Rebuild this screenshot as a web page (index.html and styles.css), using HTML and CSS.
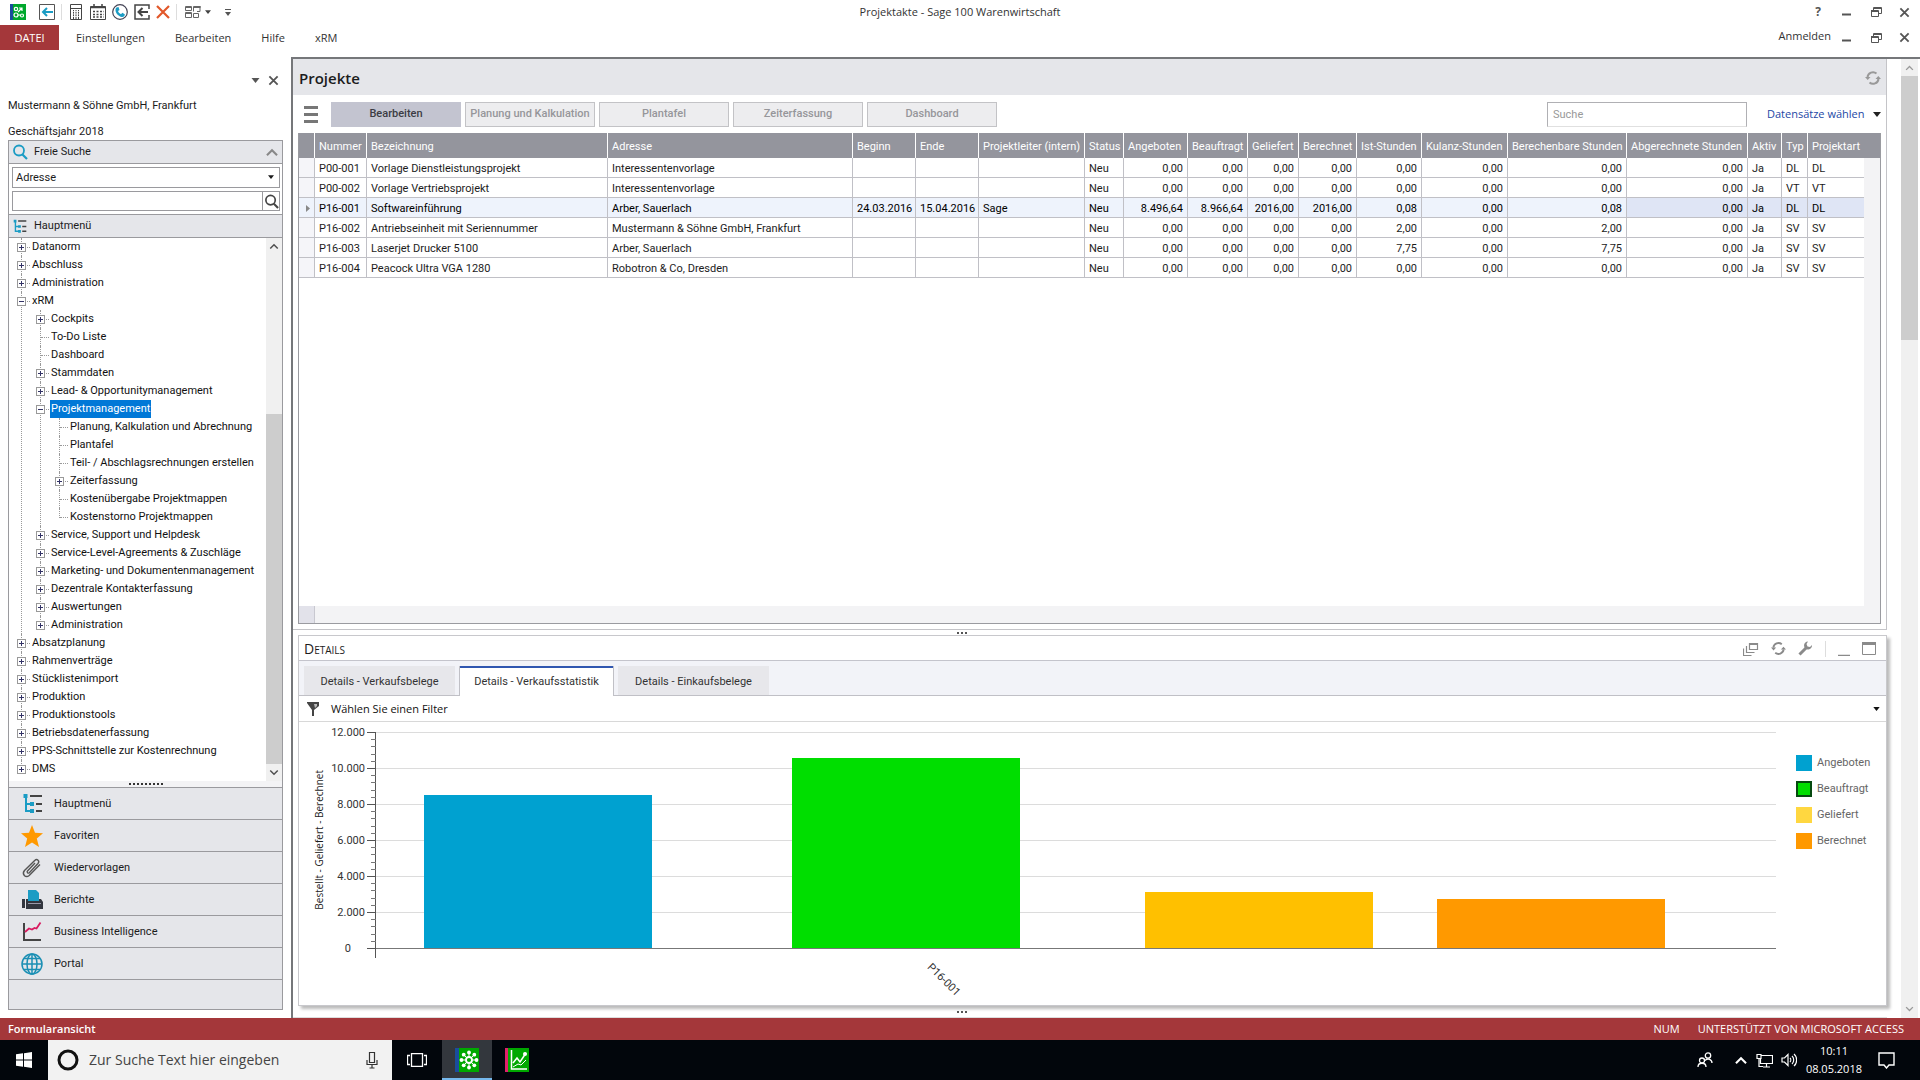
FILE: index.html
```html
<!DOCTYPE html>
<html lang="de">
<head>
<meta charset="utf-8">
<title>Projektakte - Sage 100 Warenwirtschaft</title>
<link rel="stylesheet" href="styles.css">
</head>
<body>
<svg class="defs" aria-hidden="true">
  <symbol id="i-close" viewBox="0 0 12 12"><path d="M1.5 1.5l9 9M10.5 1.5l-9 9" fill="none" stroke="currentColor" stroke-width="2"/></symbol>
  <symbol id="i-restore" viewBox="0 0 12 12"><path d="M3.5 4V1.5h8v6H9M1 4.5h7.500v6H1.500v-6M1 5.500h7.500M3.500 2.500h8" fill="none" stroke="currentColor"/></symbol>
  <symbol id="i-min" viewBox="0 0 12 12"><path d="M1 8.500h9" stroke="currentColor" stroke-width="2"/></symbol>
  <symbol id="i-refresh" viewBox="0 0 16 16"><path d="M2.500 7A5.500 5.500 0 0 1 11.500 3.500M13.500 9A5.500 5.500 0 0 1 4.500 12.500" fill="none" stroke="currentColor" stroke-width="2"/><path d="M0 7h5.500L2.700 10zM10.500 9H16l-2.700-3z" fill="currentColor"/></symbol>
  <symbol id="i-menu" viewBox="0 0 22 22"><path d="M5 4v14h6M5 11h6" fill="none" stroke="#1b9cc4" stroke-width="2"/><path d="M2.500 1h4v4h-4zM9 9h4v4H9zM9 16h4v4H9z" fill="#1b9cc4"/><path d="M9 3h12M15 11h6M15 18h6" stroke="#444" stroke-width="2"/></symbol>
  <symbol id="i-search" viewBox="0 0 16 16"><circle cx="7" cy="6.500" r="5" fill="none" stroke="currentColor" stroke-width="1.800"/><path d="M10.500 10.500l4.500 4.500" stroke="currentColor" stroke-width="2.200"/></symbol>
  <symbol id="i-up" viewBox="0 0 12 8"><path d="M1.500 6.500L6 2l4.500 4.500" fill="none" stroke="currentColor" stroke-width="1.800"/></symbol>
  <symbol id="i-down" viewBox="0 0 12 8"><path d="M1.500 1.500L6 6l4.500-4.500" fill="none" stroke="currentColor" stroke-width="1.800"/></symbol>
  <symbol id="i-tri" viewBox="0 0 8 5"><path d="M0 0h8L4 5z" fill="currentColor"/></symbol>
</svg>
<div class="app">
  <header class="titlebar">
    <div class="quick">
      <svg width="16" height="16" viewBox="0 0 16 16"><path d="M0 0h16v16H0z" fill="#00a82d"/><path d="M0 0h3v16H0z" fill="#1a4d9c"/><g fill="none" stroke="#fff" stroke-width="1.200"><circle cx="6" cy="5" r="1.700"/><circle cx="6" cy="11" r="2"/><circle cx="12" cy="11.500" r="1.500"/><path d="M8 8l4-4M9 4h3v3M8 11h2"/></g></svg>
      <svg class="q2" width="16" height="16" viewBox="0 0 16 16"><path d="M.5.500h15v15H.500z" fill="#fff" stroke="#555"/><path d="M14 8H4M8 4L4 8l4 4" fill="none" stroke="#1b9cc4" stroke-width="2"/></svg>
      <i class="bar"></i>
      <svg width="12" height="16" viewBox="0 0 12 16"><path d="M.5.500h11v15H.500zM.500 4.500h11M3.500 6v9M6 6v9M8.500 6v9" fill="none" stroke="#444"/><path d="M1 7.500h10M1 10h10M1 12.500h10" stroke="#fff" stroke-width=".8"/></svg>
      <svg class="q4" width="16" height="16" viewBox="0 0 16 16"><path d="M.500 2.500h15v13H.500z" fill="none" stroke="#444"/><path d="M.500 3.500h15M4 0v3M12 0v3" stroke="#444" stroke-width="1.500"/><path d="M3 7.500h11M3 10.500h11M3 13h11" stroke="#444" stroke-width="1.500" stroke-dasharray="2 1.500"/></svg>
      <svg width="16" height="16" viewBox="0 0 16 16"><circle cx="8" cy="8" r="7.300" fill="#fff" stroke="#445" stroke-width="1.200"/><path d="M4.500 3.500l2-.5 1 3-1.500 1c.5 1.500 1.500 2.500 3 3.200l1.300-1.400 2.500 1.500c0 2-1.500 3-3 2.700C6.500 12.500 3.500 9 3.500 6c0-1 .3-2 1-2.500z" fill="#1b9cc4"/></svg>
      <svg width="16" height="16" viewBox="0 0 16 16"><path d="M15 5V1H1v14h14v-4" fill="none" stroke="#444" stroke-width="1.500"/><path d="M14 8H5M8.500 4L4.500 8l4 4" fill="none" stroke="#444" stroke-width="2"/></svg>
      <svg width="14" height="14" viewBox="0 0 14 14"><path d="M1 1l12 12M13 1L1 13" stroke="#e2582a" stroke-width="2.200"/></svg>
      <i class="bar"></i>
      <svg width="16" height="14" viewBox="0 0 16 14"><path d="M.500 5.500v-4h6v4zM8.500 6.500v-5h7M15 1v5.500h-3M.500 12.500v-5h6v5zM8.500 12.500v-4h5v4zM.500 2.500h6M8.500 2.500h7M.500 8.500h6" fill="none" stroke="#666"/></svg>
      <svg class="tri" width="6" height="4"><use href="#i-tri"/></svg>
      <svg class="q9" width="6" height="7" viewBox="0 0 6 7"><path d="M0 .500h6" stroke="#555"/><path d="M0 3h6L3 7z" fill="#555"/></svg>
    </div>
    <h1 class="apptitle">Projektakte - Sage 100 Warenwirtschaft</h1>
    <div class="winctl">
      <button class="ib help" aria-label="Hilfe">?</button>
      <button class="ib" aria-label="Minimieren"><svg width="12" height="12"><use href="#i-min"/></svg></button>
      <button class="ib" aria-label="Wiederherstellen"><svg width="12" height="12"><use href="#i-restore"/></svg></button>
      <button class="ib" aria-label="Schließen"><svg width="11" height="11"><use href="#i-close"/></svg></button>
    </div>
  </header>
  <nav class="menubar">
    <button class="file">DATEI</button>
    <button>Einstellungen</button>
    <button>Bearbeiten</button>
    <button>Hilfe</button>
    <button>xRM</button>
    <div class="winctl">
      <a href="#" class="login">Anmelden</a>
      <button class="ib" aria-label="Formular minimieren"><svg width="12" height="12"><use href="#i-min"/></svg></button>
      <button class="ib" aria-label="Formular wiederherstellen"><svg width="12" height="12"><use href="#i-restore"/></svg></button>
      <button class="ib" aria-label="Formular schließen"><svg width="11" height="11"><use href="#i-close"/></svg></button>
    </div>
  </nav>

  <div class="work">
    <aside class="side">
      <div class="sidectl">
        <button class="ib" aria-label="Optionen"><svg width="9" height="5"><use href="#i-tri"/></svg></button>
        <button class="ib" aria-label="Bereich schließen"><svg width="11" height="11"><use href="#i-close"/></svg></button>
      </div>
      <p class="firm">Mustermann &amp; Söhne GmbH, Frankfurt</p>
      <p class="year">Geschäftsjahr 2018</p>
      <div class="sidebox">
        <h2 class="sidehead"><svg class="blue" width="16" height="16"><use href="#i-search"/></svg><span>Freie Suche</span><svg class="grey" width="14" height="9"><use href="#i-up"/></svg></h2>
        <div class="finder">
          <div class="combo">
            <select aria-label="Suchbereich"><option>Adresse</option></select>
            <svg width="6" height="4"><use href="#i-tri"/></svg>
          </div>
          <div class="findrow">
            <input type="text" aria-label="Suchbegriff">
            <button aria-label="Suchen"><svg width="15" height="15"><use href="#i-search"/></svg></button>
          </div>
        </div>
        <h2 class="sidehead main"><svg width="15" height="15"><use href="#i-menu"/></svg><span>Hauptmenü</span></h2>
        <div class="treewrap">
          <ul class="tree">
            <li class="x"><b></b><span>Datanorm</span></li>
            <li class="x"><b></b><span>Abschluss</span></li>
            <li class="x"><b></b><span>Administration</span></li>
            <li class="x open"><b></b><span>xRM</span>
              <ul>
                <li class="x"><b></b><span>Cockpits</span></li>
                <li><span>To-Do Liste</span></li>
                <li><span>Dashboard</span></li>
                <li class="x"><b></b><span>Stammdaten</span></li>
                <li class="x"><b></b><span>Lead- &amp; Opportunitymanagement</span></li>
                <li class="x open"><b></b><span class="sel">Projektmanagement</span>
                  <ul>
                    <li><span>Planung, Kalkulation und Abrechnung</span></li>
                    <li><span>Plantafel</span></li>
                    <li><span>Teil- / Abschlagsrechnungen erstellen</span></li>
                    <li class="x"><b></b><span>Zeiterfassung</span></li>
                    <li><span>Kostenübergabe Projektmappen</span></li>
                    <li><span>Kostenstorno Projektmappen</span></li>
                  </ul>
                </li>
                <li class="x"><b></b><span>Service, Support und Helpdesk</span></li>
                <li class="x"><b></b><span>Service-Level-Agreements &amp; Zuschläge</span></li>
                <li class="x"><b></b><span>Marketing- und Dokumentenmanagement</span></li>
                <li class="x"><b></b><span>Dezentrale Kontakterfassung</span></li>
                <li class="x"><b></b><span>Auswertungen</span></li>
                <li class="x"><b></b><span>Administration</span></li>
              </ul>
            </li>
            <li class="x"><b></b><span>Absatzplanung</span></li>
            <li class="x"><b></b><span>Rahmenverträge</span></li>
            <li class="x"><b></b><span>Stücklistenimport</span></li>
            <li class="x"><b></b><span>Produktion</span></li>
            <li class="x"><b></b><span>Produktionstools</span></li>
            <li class="x"><b></b><span>Betriebsdatenerfassung</span></li>
            <li class="x"><b></b><span>PPS-Schnittstelle zur Kostenrechnung</span></li>
            <li class="x"><b></b><span>DMS</span></li>
          </ul>
          <div class="sb tree-sb"><svg width="10" height="7"><use href="#i-up"/></svg><div class="track"><i class="before"></i><i class="thumb"></i></div><svg width="10" height="7"><use href="#i-down"/></svg></div>
        </div>
        <div class="grip"><i></i></div>
        <nav class="navs">
          <button><svg width="22" height="22"><use href="#i-menu"/></svg>Hauptmenü</button>
          <button><svg width="22" height="22" viewBox="0 0 22 22"><path d="M11 0l3 7.800 8 .4-6.200 5.300L18 22l-7-4.600L4 22l2.200-8.500L0 8.200l8-.4z" fill="#ff9900"/></svg>Favoriten</button>
          <button><svg width="22" height="22" viewBox="0 0 22 22"><path d="M14 6L6.500 14c-1 1.200.5 2.800 1.800 1.700L17 6.500c2-2.300-.8-5.300-3.300-3L3.500 13.500c-3 3.500 1 8 4.700 5L19 7.500" fill="none" stroke="#555" stroke-width="1.400"/></svg>Wiedervorlagen</button>
          <button><svg width="22" height="22" viewBox="0 0 22 22"><path d="M7 1h8l3 3v8H7z" fill="#1b9cc4"/><path d="M5 10h2v2h11v-2h2l2 3v7H5zM1 10h3v9H1z" fill="#33363f"/><path d="M7 14.500h13" stroke="#99a"/></svg>Berichte</button>
          <button><svg width="22" height="22" viewBox="0 0 22 22"><path d="M3 2v17h17" fill="none" stroke="#444" stroke-width="2"/><path d="M4 11l4-3.500 3 1 2.500-1.500 2 .5 4-6" fill="none" stroke="#d81b60" stroke-width="1.800"/></svg>Business Intelligence</button>
          <button><svg width="22" height="22" viewBox="0 0 22 22"><g fill="none" stroke="#1b8fb4" stroke-width="1.500"><circle cx="11" cy="11" r="10"/><ellipse cx="11" cy="11" rx="5" ry="10"/><path d="M11 1v20M1 11h20M3 5.500h16M3 16.500h16"/></g></svg>Portal</button>
          <div class="rest"></div>
        </nav>
      </div>
    </aside>

    <main class="form">
      <div class="content">
        <section class="upper">
          <header class="head"><h2>Projekte</h2><button class="ib" aria-label="Aktualisieren"><svg width="16" height="16"><use href="#i-refresh"/></svg></button></header>
          <div class="tools">
            <button class="ib burger" aria-label="Menü"><i></i><i></i><i></i></button>
            <button class="tb on">Bearbeiten</button>
            <button class="tb">Planung und Kalkulation</button>
            <button class="tb">Plantafel</button>
            <button class="tb">Zeiterfassung</button>
            <button class="tb">Dashboard</button>
            <input class="search" type="search" placeholder="Suche" aria-label="Suche">
            <a href="#" class="pick">Datensätze wählen <svg width="8" height="5"><use href="#i-tri"/></svg></a>
          </div>
          <div class="grid">
            <div class="gridbody">
              <table>
                <colgroup><col class="w16"><col class="w52"><col class="w241"><col class="w245"><col class="w63"><col class="w63"><col class="w106"><col class="w39"><col class="w64"><col class="w60"><col class="w51"><col class="w58"><col class="w65"><col class="w86"><col class="w119"><col class="w121"><col class="w34"><col class="w26"><col></colgroup>
                <thead><tr><th></th><th>Nummer</th><th>Bezeichnung</th><th>Adresse</th><th>Beginn</th><th>Ende</th><th>Projektleiter (intern)</th><th>Status</th><th>Angeboten</th><th>Beauftragt</th><th>Geliefert</th><th>Berechnet</th><th>Ist-Stunden</th><th>Kulanz-Stunden</th><th>Berechenbare Stunden</th><th>Abgerechnete Stunden</th><th>Aktiv</th><th>Typ</th><th>Projektart</th></tr></thead>
                <tbody>
                  <tr><td></td><td>P00-001</td><td>Vorlage Dienstleistungsprojekt</td><td>Interessentenvorlage</td><td></td><td></td><td></td><td>Neu</td><td class="n">0,00</td><td class="n">0,00</td><td class="n">0,00</td><td class="n">0,00</td><td class="n">0,00</td><td class="n">0,00</td><td class="n">0,00</td><td class="n">0,00</td><td>Ja</td><td>DL</td><td>DL</td></tr>
                  <tr><td></td><td>P00-002</td><td>Vorlage Vertriebsprojekt</td><td>Interessentenvorlage</td><td></td><td></td><td></td><td>Neu</td><td class="n">0,00</td><td class="n">0,00</td><td class="n">0,00</td><td class="n">0,00</td><td class="n">0,00</td><td class="n">0,00</td><td class="n">0,00</td><td class="n">0,00</td><td>Ja</td><td>VT</td><td>VT</td></tr>
                  <tr class="cur"><td><svg width="4" height="7" viewBox="0 0 4 7"><path d="M0 0l4 3.500L0 7z" fill="#888"/></svg></td><td>P16-001</td><td>Softwareinführung</td><td>Arber, Sauerlach</td><td>24.03.2016</td><td>15.04.2016</td><td>Sage</td><td>Neu</td><td class="n">8.496,64</td><td class="n">8.966,64</td><td class="n">2016,00</td><td class="n">2016,00</td><td class="n">0,08</td><td class="n">0,00</td><td class="n">0,08</td><td class="n deep">0,00</td><td class="deep">Ja</td><td class="deep">DL</td><td class="deep">DL</td></tr>
                  <tr><td></td><td>P16-002</td><td>Antriebseinheit mit Seriennummer</td><td>Mustermann &amp; Söhne GmbH, Frankfurt</td><td></td><td></td><td></td><td>Neu</td><td class="n">0,00</td><td class="n">0,00</td><td class="n">0,00</td><td class="n">0,00</td><td class="n">2,00</td><td class="n">0,00</td><td class="n">2,00</td><td class="n">0,00</td><td>Ja</td><td>SV</td><td>SV</td></tr>
                  <tr><td></td><td>P16-003</td><td>Laserjet Drucker 5100</td><td>Arber, Sauerlach</td><td></td><td></td><td></td><td>Neu</td><td class="n">0,00</td><td class="n">0,00</td><td class="n">0,00</td><td class="n">0,00</td><td class="n">7,75</td><td class="n">0,00</td><td class="n">7,75</td><td class="n">0,00</td><td>Ja</td><td>SV</td><td>SV</td></tr>
                  <tr><td></td><td>P16-004</td><td>Peacock Ultra VGA 1280</td><td>Robotron &amp; Co, Dresden</td><td></td><td></td><td></td><td>Neu</td><td class="n">0,00</td><td class="n">0,00</td><td class="n">0,00</td><td class="n">0,00</td><td class="n">0,00</td><td class="n">0,00</td><td class="n">0,00</td><td class="n">0,00</td><td>Ja</td><td>SV</td><td>SV</td></tr>
                </tbody>
              </table>
              <div class="vstrip"></div>
            </div>
            <div class="hstrip"><i></i></div>
          </div>
        </section>
        <div class="dots"><i></i><i></i><i></i></div>
        <section class="details">
          <header class="dhead"><h2>Details</h2>
            <div class="dicons">
              <button class="ib" aria-label="Fenster"><svg width="16" height="14" viewBox="0 0 16 14"><path d="M6.500 1.500h8v6h-8zM6 2.500h9M3.500 4v6.500h8M.500 6.500v7h8" fill="none" stroke="currentColor" stroke-width="1.200"/></svg></button>
              <button class="ib" aria-label="Neu laden"><svg width="15" height="15"><use href="#i-refresh"/></svg></button>
              <button class="ib" aria-label="Einstellungen"><svg width="15" height="15" viewBox="0 0 15 15"><path d="M1.500 13.500l7-7" stroke="currentColor" stroke-width="3"/><path d="M14 4a4 4 0 1 1-4-3.500L8.500 3l1 2.500 2.500.5z" fill="currentColor"/></svg></button>
              <i class="bar"></i>
              <button class="ib" aria-label="Bereich minimieren"><svg width="12" height="14" viewBox="0 0 12 14"><path d="M0 13.500h12" stroke="currentColor" stroke-width="1.500"/></svg></button>
              <button class="ib" aria-label="Bereich maximieren"><svg width="14" height="13" viewBox="0 0 14 13"><path d="M.500.500h13v12H.500z" fill="none" stroke="currentColor"/><path d="M0 0h14v3H0z" fill="currentColor"/></svg></button>
            </div>
          </header>
          <div class="tabs" role="tablist">
            <button role="tab">Details - Verkaufsbelege</button>
            <button role="tab" class="on">Details - Verkaufsstatistik</button>
            <button role="tab">Details - Einkaufsbelege</button>
          </div>
          <button class="filter"><svg width="12" height="14" viewBox="0 0 12 14"><path d="M0 0h12v4L7 8v6H5V8L0 1z" fill="#444"/><path d="M7 2h3v2L8 6z" fill="#bbb"/></svg><span>Wählen Sie einen Filter</span><svg width="7" height="4"><use href="#i-tri"/></svg></button>
          <div class="chart">
            <div class="ytitle"><span>Bestellt - Geliefert - Berechnet</span></div>
            <div class="ylabels"><span>12.000</span><span>10.000</span><span>8.000</span><span>6.000</span><span>4.000</span><span>2.000</span><span class="zero">0</span></div>
            <svg class="axis" width="9" height="226" viewBox="0 0 9 226"><path d="M8.500 0v226M0 .500h9M0 36.500h9M0 72.500h9M0 108.500h9M0 144.500h9M0 180.500h9M0 216.500h9" fill="none" stroke="#555"/><path d="M4 7.500h5M4 14.500h5M4 22.500h5M4 29.500h5M4 43.500h5M4 50.500h5M4 58.500h5M4 65.500h5M4 79.500h5M4 86.500h5M4 94.500h5M4 101.500h5M4 115.500h5M4 122.500h5M4 130.500h5M4 137.500h5M4 151.500h5M4 158.500h5M4 166.500h5M4 173.500h5M4 187.500h5M4 194.500h5M4 202.500h5M4 209.500h5" stroke="#777"/></svg>
            <div class="plotcol">
              <div class="plot">
                <i class="c1" style="height:71%"></i>
                <i class="c2" style="height:88%"></i>
                <i class="c3" style="height:26%"></i>
                <i class="c4" style="height:22.500%"></i>
              </div>
              <div class="xlabel"><span>P16-001</span></div>
            </div>
            <ul class="legend">
              <li><i class="c1"></i>Angeboten</li>
              <li><i class="c2 mark"></i>Beauftragt</li>
              <li><i class="c3l"></i>Geliefert</li>
              <li><i class="c4"></i>Berechnet</li>
            </ul>
          </div>
        </section>
        <div class="dots low"><i></i><i></i><i></i></div>
      </div>
      <div class="sb page-sb"><svg width="9" height="6"><use href="#i-up"/></svg><div class="track"><i class="thumb"></i></div><svg width="9" height="6"><use href="#i-down"/></svg></div>
    </main>
  </div>

  <footer class="status"><span class="view">Formularansicht</span><span>NUM</span><span>UNTERSTÜTZT VON MICROSOFT ACCESS</span></footer>
  <footer class="taskbar">
    <button class="start" aria-label="Start"><svg width="16" height="16" viewBox="0 0 16 16"><path d="M0 2.300L7 1.300v6.200H0zM8 1.200L16 0v7.500H8zM0 8.500h7v6.200l-7-1zM8 8.500h8V16l-8-1.200z" fill="#fff"/></svg></button>
    <label class="cortana"><svg width="22" height="22" viewBox="0 0 22 22"><circle cx="11" cy="11" r="9" fill="none" stroke="#111" stroke-width="3"/></svg><input type="text" placeholder="Zur Suche Text hier eingeben"><svg width="12" height="18" viewBox="0 0 12 18"><path d="M3.500 1.500h5v10h-5zM1 9v4.500h10V9M6 14v3M3.500 17h5" fill="none" stroke="#333" stroke-width="1.200"/></svg></label>
    <button class="task" aria-label="Aktive Anwendungen"><svg width="20" height="14" viewBox="0 0 20 14"><path d="M4.500.500h11v13h-11zM3 2.500H.500v9H3M17 2.500h2.500v9H17" fill="none" stroke="#fff" stroke-width="1.300"/></svg></button>
    <button class="task active" aria-label="Sage 100"><svg width="24" height="24" viewBox="0 0 24 24"><path d="M0 0h24v24H0z" fill="#00a800"/><path d="M0 0h4v24H0z" fill="#1a4d9c"/><g stroke="#fff" stroke-width="1"><path d="M14 4v16M6 12h16M8.500 6.500l11 11M19.500 6.500l-11 11"/></g><g fill="#fff"><circle cx="14" cy="4.500" r="1.900"/><circle cx="14" cy="19.500" r="1.900"/><circle cx="6.500" cy="12" r="1.900"/><circle cx="21.500" cy="12" r="1.900"/><circle cx="8.700" cy="6.700" r="1.900"/><circle cx="19.300" cy="6.700" r="1.900"/><circle cx="8.700" cy="17.300" r="1.900"/><circle cx="19.300" cy="17.300" r="1.900"/></g><circle cx="14" cy="12" r="3" fill="#00a800" stroke="#fff" stroke-width="1.800"/></svg></button>
    <button class="task" aria-label="Sage Auswertung"><svg width="24" height="24" viewBox="0 0 24 24"><path d="M0 0h24v24H0z" fill="#00a800"/><path d="M0 0h3v24H0z" fill="#e0206a"/><g fill="none" stroke="#fff" stroke-width="1.500"><path d="M6.500 2v19H22M8 15l4-5 3 4 6-9"/><path d="M8 19l5-3 3 1 5-5" stroke-width="1"/></g><circle cx="20" cy="6" r="2" fill="#fff"/></svg></button>
    <div class="tray">
      <svg width="16" height="16" viewBox="0 0 16 16"><g fill="none" stroke="#fff" stroke-width="1.300"><circle cx="11" cy="3.500" r="2.700"/><circle cx="5" cy="8.500" r="2.500"/><path d="M1 15c0-5 8-5 8 0M8 8.500c3-3 7-1 7 2.500"/></g></svg>
      <svg class="t2" width="14" height="9"><use href="#i-up"/></svg>
      <svg width="17" height="15" viewBox="0 0 17 15"><path d="M5 2.500h11.500v8H4.500V5.500M1 1.500h4v4H1zM3 5.500v8h4M10.500 11v3M7 14h7" fill="none" stroke="#fff" stroke-width="1.200"/></svg>
      <svg width="16" height="14" viewBox="0 0 16 14"><path d="M1 5h2.500L7 1.500v11L3.500 9H1zM9 5c1 1 1 3 0 4M11 3c2.300 2 2.300 6 0 8M13 1c3.500 3 3.500 9 0 12" fill="none" stroke="#fff" stroke-width="1.200"/></svg>
      <time class="clock"><span>10:11</span><span>08.05.2018</span></time>
      <svg width="17" height="17" viewBox="0 0 17 17"><path d="M1 1h15v12H11l-2.500 3L6 13H1z" fill="none" stroke="#fff" stroke-width="1.400"/></svg>
    </div>
  </footer>
</div>
</body>
</html>
```
FILE: styles.css
```css
* { box-sizing: border-box; }
body { margin: 0; background: #fff; color: #1c1c1c; font: 11px/16px "Roboto", "Open Sans", sans-serif; }
h1, h2, p, ul { margin: 0; padding: 0; font-weight: 400; font-size: inherit; list-style: none; }
i, svg { display: block; flex: none; }
button { margin: 0; padding: 0; border: 0; background: none; color: inherit; font: inherit; }
input, select { margin: 0; border: 0; background: none; color: inherit; font: inherit; border-radius: 0; min-width: 0; }
a { text-decoration: none; color: inherit; }
.defs { display: none; }
.ib { display: flex; align-items: center; justify-content: center; color: #555; }

.app { display: flex; flex-direction: column; min-height: 100vh; }

/* title and menu bars */
.titlebar, .menubar { font-family: "Open Sans", sans-serif; color: #333; }
.titlebar { display: grid; grid-template-columns: 1fr auto 1fr; align-items: center; height: 24px; }
.quick { display: flex; align-items: center; padding-left: 10px; gap: 6px; }
.quick .bar { margin-right: 2px; }
.quick .q2 { margin-left: 7px; }
.quick .q4 { margin: 0 0 0 2px; }
.quick .q9 { margin-left: 8px; }
.quick .tri { color: #444; margin-left: -2px; }
.bar { width: 1px; height: 16px; background: #ddd; }
.apptitle { font-size: 11px; }
.winctl { display: flex; justify-content: flex-end; align-items: center; gap: 17px; padding-right: 10px; margin-left: auto; }
.help { font-size: 12px; font-weight: 700; width: 12px; }
.menubar { display: flex; align-items: stretch; margin-top: 1px; height: 25px; gap: 30px; }
.menubar .file { width: 59px; background: #a4373a; color: #fff; margin-right: -13px; }
.login { margin: -4px -7px 0 0; }

.work { display: flex; flex: 1; margin-top: 7px; }

/* navigation pane */
.side { width: 291px; flex: none; padding: 16px 8px 8px; display: flex; flex-direction: column; }
.sidectl { display: flex; justify-content: flex-end; gap: 8px; padding-right: 4px; height: 14px; }
.firm { margin-top: 11px; }
.year { margin: 10px 0 0; }
.sidebox { flex: 1; display: flex; flex-direction: column; border: 1px solid #9a9a9e; background: #e5e6ea; }
.sidehead { display: flex; align-items: center; height: 23px; gap: 6px; padding: 0 3px; border-bottom: 1px solid #9a9a9e; }
.sidehead span { flex: 1; }
.sidehead.main { height: 24px; border-top: 1px solid #9a9a9e; gap: 7px; }
.blue { color: #1b9cc4; }
.grey { color: #888; }
.finder { padding: 3px 2px 3px 3px; background: #fff; display: grid; gap: 3px; }
.combo, .findrow { display: flex; align-items: center; border: 1px solid #9a9a9e; background: #fff; }
.combo { position: relative; height: 21px; }
.findrow { height: 20px; }
.combo select { width: 100%; height: 19px; appearance: none; padding: 0 3px; }
.combo svg { position: absolute; right: 5px; top: 7px; pointer-events: none; }
.findrow input { flex: 1; height: 18px; }
.findrow button { width: 17px; height: 18px; border-left: 1px solid #9a9a9e; color: #444; display: grid; place-items: center; }
.treewrap { display: flex; flex: 1; background: #fff; }
.tree { flex: 1; padding-bottom: 2px; }
.tree li { position: relative; line-height: 18px; padding-left: 23px; white-space: nowrap; color: #111; }
.tree li::before { content: ""; position: absolute; left: 12px; top: 0; bottom: 0; border-left: 1px dotted #999; }
.tree li::after { content: ""; position: absolute; left: 13px; top: 9px; width: 8px; border-top: 1px dotted #999; }
.tree li:last-child::before { bottom: auto; height: 10px; }
.tree ul { margin-left: -4px; }
.tree b { position: absolute; z-index: 1; left: 8px; top: 5px; width: 9px; height: 9px; border: 1px solid #999; background: linear-gradient(#336, #336) 1px 3px / 5px 1px no-repeat, linear-gradient(#336, #336) 3px 1px / 1px 5px no-repeat, #fff; }
.tree .open > b { background: linear-gradient(#336, #336) 1px 3px / 5px 1px no-repeat, #fff; }
.sel { display: inline-block; background: #0078d7; color: #fff; margin-left: -1px; padding: 0 1px; }
.sb { display: flex; flex-direction: column; align-items: center; background: #f0f0f0; color: #505050; }
.track { flex: 1; width: 100%; display: flex; flex-direction: column; margin: 5px 0; }
.thumb { background: #cdcdcd; }
.tree-sb { width: 16px; padding: 5px 0; }
.tree-sb .before { flex: 10; }
.tree-sb .thumb { flex: 22; }
.grip { height: 6px; padding-top: 2px; background: #f3f3f5; display: grid; justify-items: center; }
.grip i { width: 34px; border-top: 2px dotted #333; }
.navs button, .rest { display: flex; align-items: center; gap: 11px; width: 100%; height: 32px; padding: 0 12px; border-top: 1px solid #9a9a9e; text-align: left; }
.rest { height: 30px; }

/* form */
.form { flex: 1; min-width: 0; display: flex; border: solid #75777a; border-width: 2px 0 0 2px; }
.content { flex: 1; min-width: 0; display: flex; flex-direction: column; padding-right: 14px; }
.upper { flex: 1; display: flex; flex-direction: column; border: solid #c4c4c8; border-width: 0 1px 1px 0; }
.head { display: flex; align-items: center; justify-content: space-between; height: 36px; padding: 2px 5px 0 6px; background: #e5e6ea; }
.head h2 { font: 600 15px/20px "Open Sans", sans-serif; }
.head .ib { color: #999; }
.tools { display: flex; align-items: center; gap: 4px; height: 38px; padding: 0 9px 0 11px; }
.burger { flex-direction: column; gap: 4px; width: 13px; margin-right: 10px; }
.burger i { width: 14px; height: 3px; background: #777; }
.tb { width: 130px; height: 25px; border: 1px solid #c3c3c6; background: #ededef; color: #96969a; font-weight: 500; }
.tb.on { background: #c3c4d0; border-color: #c3c4d0; color: #3c3c44; }
.search { width: 200px; height: 25px; margin-left: auto; padding: 0 5px; border: 1px solid #b0b0b4; border-bottom-color: #e0e0e0; appearance: none; }
.search::placeholder { color: #999; opacity: 1; }
.pick { display: flex; align-items: center; justify-content: space-between; gap: 8px; width: 110px; margin-left: 16px; color: #2447a5; font: 11px/16px "Open Sans", sans-serif; white-space: nowrap; }
.pick svg { color: #222; }
.grid { flex: 1; display: flex; flex-direction: column; margin: 0 5px 5px; border: solid #9a9ba0; border-width: 0 1px 1px 1px; }
.gridbody { flex: 1; display: flex; align-items: stretch; }
table { flex: 1; align-self: flex-start; border-collapse: separate; border-spacing: 0; table-layout: fixed; width: 100%; }
th { height: 25px; padding: 2px 0 0 4px; background: #94959d; color: #fff; font-weight: 400; text-align: left; border-right: 1px solid #fff; white-space: nowrap; }
th:last-child, td:last-child { border-right: 0; }
td { height: 20px; padding: 2px 4px 0; border: solid #c0c0c6; border-width: 0 1px 1px 0; white-space: nowrap; }
td:first-child { background: #f5f5f9; padding-left: 7px; }
td.n { text-align: right; }
.cur td { background: #eef3fc; color: #000; }
.cur td.deep { background: #dfe5f5; }
.w16 { width: 16px } .w52 { width: 52px } .w241 { width: 241px } .w245 { width: 245px } .w63 { width: 63px } .w106 { width: 106px }
.w39 { width: 39px } .w64 { width: 64px } .w60 { width: 60px } .w51 { width: 51px } .w58 { width: 58px } .w65 { width: 65px }
.w86 { width: 86px } .w119 { width: 119px } .w121 { width: 121px } .w34 { width: 34px } .w26 { width: 26px }
.vstrip { width: 16px; background: linear-gradient(#94959d 25px, #f3f3f5 25px); }
.hstrip { height: 17px; background: #f3f3f5; }
.hstrip i { width: 16px; height: 17px; background: #e2e2ea; border-right: 1px solid #c8c8d0; }
.dots { display: flex; justify-content: center; gap: 2px; height: 5px; padding: 2px 16% 0 0; }
.dots i { width: 2px; height: 2px; background: #555; }
.dots.low { height: 12px; padding-top: 5px; border-bottom: 1px solid #ddd; }

/* details */
.details { margin-left: 5px; border: 1px solid #c8c8cc; background: #fff; box-shadow: 3px 3px 3px #bbb; }
.dhead { display: flex; align-items: center; justify-content: space-between; height: 25px; padding: 1px 10px 0 5px; border-bottom: 1px solid #c4c4cc; }
.dhead h2 { font: 14px/20px "Open Sans", sans-serif; font-variant: small-caps; }
.dicons { display: flex; align-items: center; gap: 12px; }
.dicons .ib { color: #8a8a8a; }
.tabs { display: flex; gap: 4px; height: 35px; padding: 5px 5px 0; background: #f2f3f8; box-shadow: inset 0 -1px #c0c0c6; }
.tabs button { width: 151px; height: 29px; padding-top: 2px; background: #e7e7eb; color: #333; }
.tabs .on { width: 155px; height: 30px; background: #fff; border: solid #c0c0c6; border-width: 0 1px; box-shadow: inset 0 2px #2f56b0; }
.filter { display: flex; align-items: center; gap: 12px; width: 100%; height: 26px; padding: 0 6px 0 8px; border-bottom: 1px solid #d8d8d8; text-align: left; color: #111; }
.filter span { flex: 1; font: 11px/16px "Open Sans", sans-serif; }
.chart { display: flex; padding: 10px 15px 0 10px; height: 283px; }
.ytitle { width: 20px; height: 216px; display: flex; align-items: center; justify-content: center; }
.ytitle span { writing-mode: vertical-rl; transform: rotate(180deg); white-space: nowrap; font-family: "Open Sans", sans-serif; font-size: 10px; }
.ylabels { width: 36px; height: 232px; margin: -7px 2px 0 0; display: flex; flex-direction: column; justify-content: space-between; text-align: right; color: #333; }
.ylabels .zero { padding-right: 14px; }
.plotcol { flex: 1; margin-right: 20px; }
.plot { display: grid; grid-template-columns: 48fr 228fr 140fr 228fr 125fr 228fr 64fr 228fr 111fr; align-items: end; height: 217px; border-bottom: 1px solid #777; background: repeating-linear-gradient(#dcdcdc 0 1px, transparent 1px 36px); }
.plot i:nth-child(1) { grid-column: 2; }
.plot i:nth-child(2) { grid-column: 4; }
.plot i:nth-child(3) { grid-column: 6; }
.plot i:nth-child(4) { grid-column: 8; }
.c1 { background: #00a1d0; }
.c2 { background: #00de00; }
.c3 { background: #ffc000; }
.c3l { background: #ffd740; }
.c4 { background: #ff9900; }
.xlabel { display: flex; justify-content: center; padding-top: 23px; width: 81%; }
.xlabel span { transform: rotate(45deg); color: #333; }
.legend { display: grid; gap: 10px; align-content: start; padding-top: 23px; width: 75px; color: #666; }
.legend li { display: flex; align-items: center; gap: 5px; height: 16px; }
.legend i { width: 16px; height: 16px; }
.mark { border: 2px solid #064a10; }
.page-sb { width: 17px; margin-right: 2px; padding: 6px 0; color: #999; }
.page-sb .thumb { height: 264px; }

/* status and task bar */
.status { display: flex; gap: 18px; align-items: center; height: 22px; padding: 0 16px 0 8px; background: #a4373a; color: #fff; font-family: "Open Sans", sans-serif; }
.status .view { flex: 1; font-weight: 600; }
.taskbar { display: flex; height: 40px; background: #02060c; color: #fff; font-family: "Open Sans", sans-serif; }
.start, .task { width: 48px; display: grid; place-items: center; }
.task { width: 50px; }
.active { background: #33373d; box-shadow: inset 0 -2px #76b9ed; }
.cortana { display: flex; align-items: center; gap: 8px; width: 344px; padding: 0 14px 0 9px; background: #f2f2f2; color: #333; }
.cortana input { flex: 1; font-size: 14px; }
.cortana input::placeholder { color: #444; opacity: 1; }
.tray { display: flex; align-items: center; gap: 8px; margin-left: auto; padding-right: 25px; }
.tray .t2 { margin-left: 13px; }
.clock { display: grid; justify-items: center; line-height: 18px; padding: 0 8px 0 1px; }
```
